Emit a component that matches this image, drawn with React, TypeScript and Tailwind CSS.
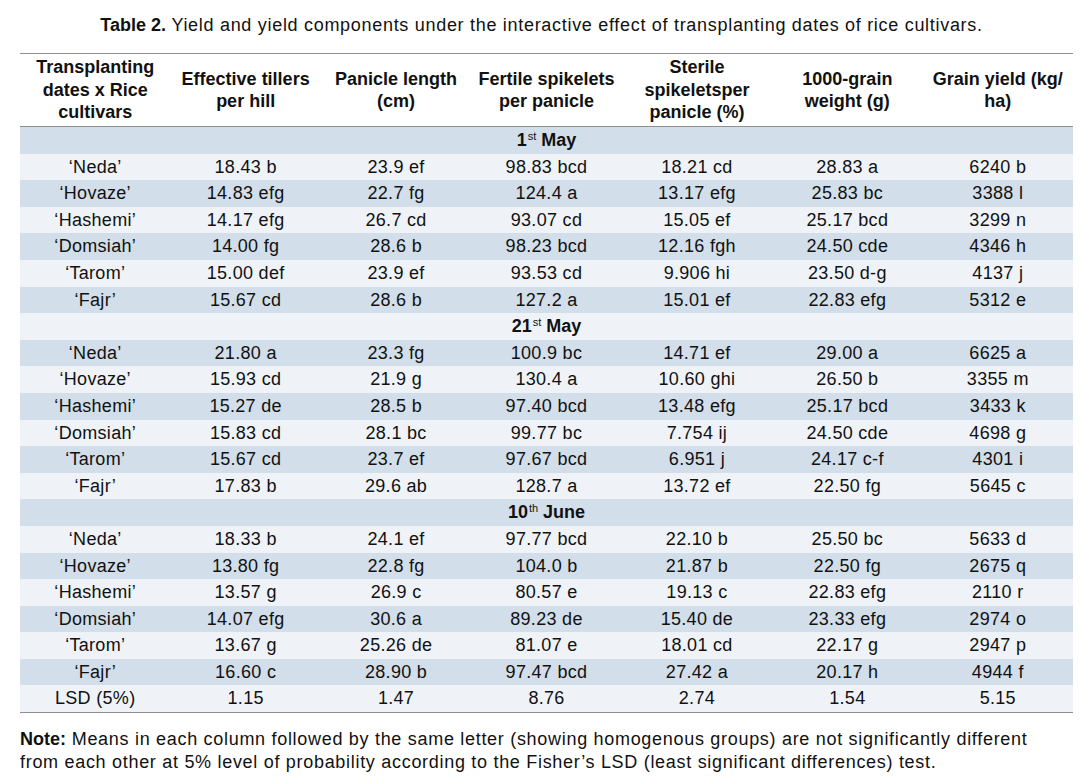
const headers = [
  ['Transplanting', 'dates x Rice', 'cultivars'],
  ['Effective tillers', 'per hill'],
  ['Panicle length', '(cm)'],
  ['Fertile spikelets', 'per panicle'],
  ['Sterile', 'spikeletsper', 'panicle (%)'],
  ['1000-grain', 'weight (g)'],
  ['Grain yield (kg/', 'ha)'],
]

type Row = { section?: [string, string, string] } | { cells: string[] }

const rows: Row[] = [
  { section: ['1', 'st', ' May'] },
  { cells: ['‘Neda’', '18.43 b', '23.9 ef', '98.83 bcd', '18.21 cd', '28.83 a', '6240 b'] },
  { cells: ['‘Hovaze’', '14.83 efg', '22.7 fg', '124.4 a', '13.17 efg', '25.83 bc', '3388 l'] },
  { cells: ['‘Hashemi’', '14.17 efg', '26.7 cd', '93.07 cd', '15.05 ef', '25.17 bcd', '3299 n'] },
  { cells: ['‘Domsiah’', '14.00 fg', '28.6 b', '98.23 bcd', '12.16 fgh', '24.50 cde', '4346 h'] },
  { cells: ['‘Tarom’', '15.00 def', '23.9 ef', '93.53 cd', '9.906 hi', '23.50 d-g', '4137 j'] },
  { cells: ['‘Fajr’', '15.67 cd', '28.6 b', '127.2 a', '15.01 ef', '22.83 efg', '5312 e'] },
  { section: ['21', 'st', ' May'] },
  { cells: ['‘Neda’', '21.80 a', '23.3 fg', '100.9 bc', '14.71 ef', '29.00 a', '6625 a'] },
  { cells: ['‘Hovaze’', '15.93 cd', '21.9 g', '130.4 a', '10.60 ghi', '26.50 b', '3355 m'] },
  { cells: ['‘Hashemi’', '15.27 de', '28.5 b', '97.40 bcd', '13.48 efg', '25.17 bcd', '3433 k'] },
  { cells: ['‘Domsiah’', '15.83 cd', '28.1 bc', '99.77 bc', '7.754 ij', '24.50 cde', '4698 g'] },
  { cells: ['‘Tarom’', '15.67 cd', '23.7 ef', '97.67 bcd', '6.951 j', '24.17 c-f', '4301 i'] },
  { cells: ['‘Fajr’', '17.83 b', '29.6 ab', '128.7 a', '13.72 ef', '22.50 fg', '5645 c'] },
  { section: ['10', 'th', ' June'] },
  { cells: ['‘Neda’', '18.33 b', '24.1 ef', '97.77 bcd', '22.10 b', '25.50 bc', '5633 d'] },
  { cells: ['‘Hovaze’', '13.80 fg', '22.8 fg', '104.0 b', '21.87 b', '22.50 fg', '2675 q'] },
  { cells: ['‘Hashemi’', '13.57 g', '26.9 c', '80.57 e', '19.13 c', '22.83 efg', '2110 r'] },
  { cells: ['‘Domsiah’', '14.07 efg', '30.6 a', '89.23 de', '15.40 de', '23.33 efg', '2974 o'] },
  { cells: ['‘Tarom’', '13.67 g', '25.26 de', '81.07 e', '18.01 cd', '22.17 g', '2947 p'] },
  { cells: ['‘Fajr’', '16.60 c', '28.90 b', '97.47 bcd', '27.42 a', '20.17 h', '4944 f'] },
  { cells: ['LSD (5%)', '1.15', '1.47', '8.76', '2.74', '1.54', '5.15'] },
]

export default function App() {
  return (
    <div className="w-[1083px] h-[778px] bg-white text-[#111] font-['Liberation_Sans',Arial,sans-serif]">
      {/* Caption */}
      <div className="pt-[13px] h-[53px] text-center text-[18px] leading-[24px] tracking-[0.7px]">
        <span className="font-bold tracking-normal">Table 2.</span> Yield and yield components under the interactive
        effect of transplanting dates of rice cultivars.
      </div>

      {/* Table */}
      <div className="mx-[20px] w-[1053px] border-t border-b border-[#8f8f8f]">
        <div className="grid grid-cols-7 h-[73px] border-b border-[#8f8f8f]">
          {headers.map((lines, i) => (
            <div
              key={i}
              className="flex flex-col items-center justify-center text-center font-bold text-[18px] leading-[22.5px]"
            >
              {lines.map((l) => (
                <span key={l}>{l}</span>
              ))}
            </div>
          ))}
        </div>

        {rows.map((row, i) => (
          <div
            key={i}
            className={`h-[26.6px] text-[18px] leading-[26.6px] tracking-[0.3px] ${i % 2 === 0 ? 'bg-[#d2dee9]' : 'bg-[#eff3f8]'}`}
          >
            {'section' in row && row.section ? (
              <div className="text-center font-bold tracking-normal">
                {row.section[0]}
                <sup className="text-[11px] font-normal relative -top-[6px] ml-[1px]">{row.section[1]}</sup>
                {row.section[2]}
              </div>
            ) : (
              <div className="grid grid-cols-7">
                {'cells' in row &&
                  row.cells.map((c, j) => (
                    <div key={j} className="text-center whitespace-nowrap">
                      {c}
                    </div>
                  ))}
              </div>
            )}
          </div>
        ))}
      </div>

      {/* Note */}
      <div className="px-[20px] pt-[15px] text-[18px] leading-[23px] tracking-[0.7px]">
        <span className="font-bold tracking-normal">Note:</span> Means in each column followed by the same letter
        (showing homogenous groups) are not significantly different
        <br />
        from each other at 5% level of probability according to the Fisher’s LSD (least significant differences) test.
      </div>
    </div>
  )
}
